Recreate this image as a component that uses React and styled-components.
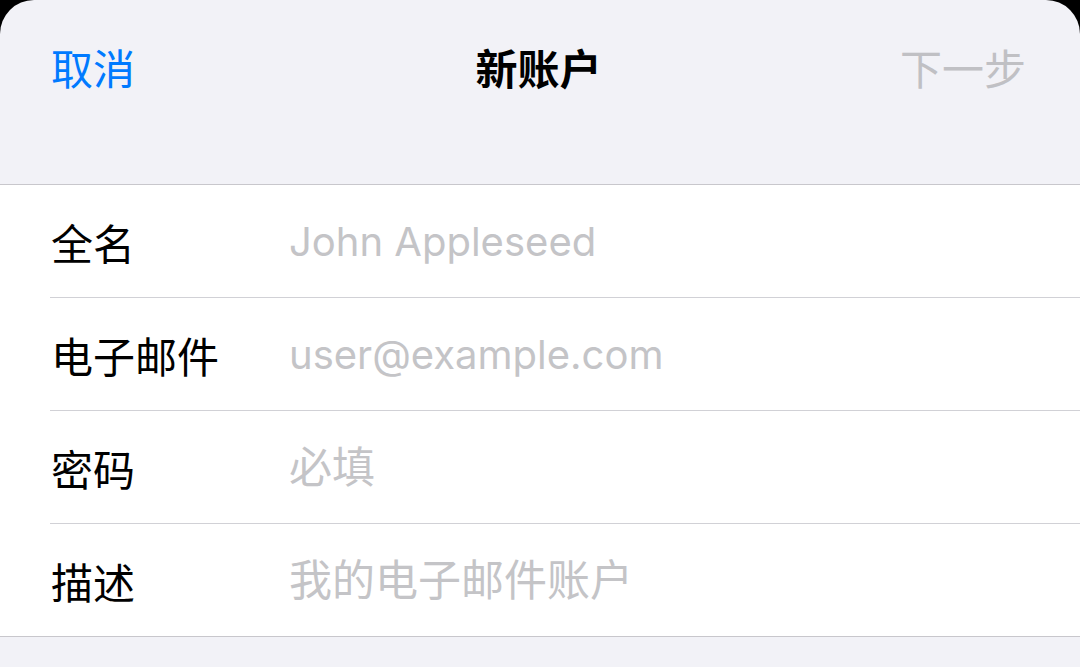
import React from 'react';
import styled, { createGlobalStyle } from 'styled-components';

const Global = createGlobalStyle`
  html, body {
    margin: 0;
    padding: 0;
    background: #000;
  }
  body {
    font-family: Inter, "Noto Sans CJK SC", sans-serif;
    -webkit-font-smoothing: antialiased;
  }
`;

const Sheet = styled.div`
  width: 1080px;
  height: 667px;
  background: #f2f2f7;
  border-radius: 34px 34px 0 0;
  overflow: hidden;
  display: flex;
  flex-direction: column;
`;

const NavBar = styled.div`
  height: 185px;
  box-sizing: border-box;
  padding: 44px 54px 0 51px;
  display: grid;
  grid-template-columns: 1fr auto 1fr;
  align-items: start;
  border-bottom: 1px solid #c8c7cc;
`;

const NavButton = styled.button`
  border: 0;
  background: none;
  padding: 0;
  font: inherit;
  font-size: 42px;
  line-height: 52px;
  color: ${(p) => (p.disabled ? '#c0c0c4' : '#007aff')};
  justify-self: ${(p) => p.$align};
  cursor: ${(p) => (p.disabled ? 'default' : 'pointer')};
`;

const Title = styled.div`
  font-size: 42px;
  line-height: 52px;
  font-weight: 700;
  color: #000;
`;

const Form = styled.div`
  background: #fff;
  padding-left: 50px;
  border-bottom: 1px solid #c8c7cc;
`;

const Row = styled.label`
  height: 112px;
  display: flex;
  align-items: center;
  border-top: ${(p) => (p.$first ? 'none' : '1px solid #d1d1d6')};
`;

const Label = styled.span`
  width: 239px;
  padding-left: 1px;
  font-size: 42px;
  color: #000;
  flex-shrink: 0;
`;

const Input = styled.input`
  flex: 1;
  border: 0;
  outline: none;
  background: transparent;
  font: inherit;
  font-size: ${(p) => (p.$cjk ? '43px' : '40px')};
  margin-left: ${(p) => (p.$cjk ? '-1px' : '-1px')};
  color: #000;
  padding: 0;
  &::placeholder {
    color: #c4c4c7;
  }
`;

const fields = [
  { label: '全名', placeholder: 'John Appleseed' },
  { label: '电子邮件', placeholder: 'user@example.com' },
  { label: '密码', placeholder: '必填', type: 'password', cjk: true },
  { label: '描述', placeholder: '我的电子邮件账户', cjk: true },
];

export default function App() {
  return (
    <>
      <Global />
      <Sheet>
        <NavBar>
          <NavButton $align="start">取消</NavButton>
          <Title>新账户</Title>
          <NavButton $align="end" disabled>
            下一步
          </NavButton>
        </NavBar>
        <Form>
          {fields.map((f, i) => (
            <Row key={f.label} $first={i === 0}>
              <Label>{f.label}</Label>
              <Input
                type={f.type || 'text'}
                placeholder={f.placeholder}
                $cjk={f.cjk}
              />
            </Row>
          ))}
        </Form>
      </Sheet>
    </>
  );
}
